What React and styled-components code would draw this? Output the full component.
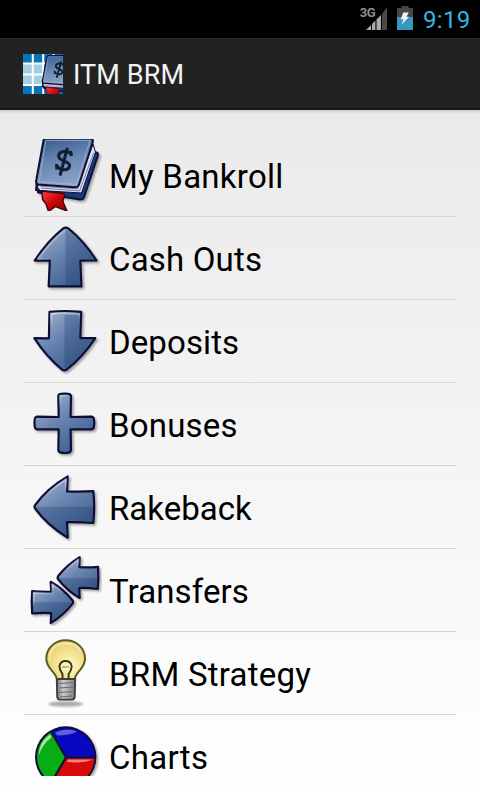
import React from 'react';
import styled, {createGlobalStyle} from 'styled-components';

const NAVY = '#0e0f38';

const Defs = () => (
  <ScDefs width="0" height="0" aria-hidden="true">
    <defs>
      <linearGradient id="steel" x1="0" y1="0" x2="0.7" y2="1">
        <stop offset="0" stopColor="#a9b8d2" />
        <stop offset="0.5" stopColor="#6884af" />
        <stop offset="1" stopColor="#3c5d8e" />
      </linearGradient>
      <linearGradient id="cover" x1="0.2" y1="0" x2="0.5" y2="1">
        <stop offset="0" stopColor="#3a5c8c" />
        <stop offset="0.45" stopColor="#6686b2" />
        <stop offset="1" stopColor="#8fa4c8" />
      </linearGradient>
      <linearGradient id="shine" x1="0" y1="0" x2="0.6" y2="1">
        <stop offset="0" stopColor="#fff" stopOpacity="0.75" />
        <stop offset="0.6" stopColor="#fff" stopOpacity="0" />
      </linearGradient>
      <linearGradient id="ribbon" x1="0" y1="0" x2="1" y2="1">
        <stop offset="0" stopColor="#f04040" />
        <stop offset="0.5" stopColor="#cc0505" />
        <stop offset="1" stopColor="#960000" />
      </linearGradient>
      <radialGradient id="glass" cx="0.6" cy="0.65" r="0.65">
        <stop offset="0" stopColor="#fffbd2" />
        <stop offset="0.5" stopColor="#f4e592" />
        <stop offset="1" stopColor="#e6d074" />
      </radialGradient>
      <linearGradient id="screw" x1="0" y1="0" x2="1" y2="0">
        <stop offset="0" stopColor="#777" />
        <stop offset="0.35" stopColor="#ccc" />
        <stop offset="1" stopColor="#7b7b7b" />
      </linearGradient>
      <filter id="drop" x="-20%" y="-20%" width="150%" height="150%">
        <feDropShadow dx="1.8" dy="1.8" stdDeviation="1.1" floodColor="#000" floodOpacity="0.35" />
      </filter>
      <filter id="soft" x="-20%" y="-60%" width="140%" height="220%">
        <feGaussianBlur stdDeviation="1.2" />
      </filter>
    </defs>
  </ScDefs>
);

const BookShape = () => (
  <>
    <path d="M61 12 L67 13.5 Q68.5 14.5 67.8 17 L54 58.5 Q53 61 50 60.5 L8 53.5 L8 47 Z" fill="#173a78" stroke={NAVY} strokeWidth="1.8" filter="url(#drop)" />
    <path d="M63 5 L65.5 13 L51.5 54 L10 51.5 Q6.5 49 8 45 L47 48 Z" fill="#dfe2ee" stroke={NAVY} strokeWidth="1" />
    <path d="M11 49 L49.5 52 L63.5 14 M10 47 L48.5 50" fill="none" stroke="#777e9f" strokeWidth="1" />
    <path d="M16 -0.6 L61 -0.2 Q63.5 0 62.7 3.5 L49 45.5 Q48 48.8 44.5 48.3 L8 45.5 Q5.3 44.5 6.3 41 L13.5 1.5 Q14 -0.5 16 -0.6 Z" fill="url(#cover)" stroke={NAVY} strokeWidth="2" />
    <path d="M15.8 1.4 L60 1.4 L46.5 45.5 L9 42.9 Z" fill="none" stroke="#b1c0da" strokeWidth="1.1" opacity="0.6" />
    <path d="M6.5 44 L6 51 L12 53" fill="none" stroke={NAVY} strokeWidth="1.8" />
    <path d="M12 52 L33.5 54.5 Q36 56 34 59 Q32 61.5 34 65 L37 72 L25.5 67.5 L18.5 72.5 L16 65 L12.5 60.5 Z" fill="url(#ribbon)" stroke="#3b0712" strokeWidth="1.4" />
    <path d="M41.5 15.5 C38 10.5 28.5 12 28.6 17.5 C29 22.5 40.5 22 39.6 27.2 C38.3 32.5 29 31.5 26.7 26.5 M37.4 8.8 L30 36.5" fill="none" stroke="#111d30" strokeWidth="3" />
    <path d="M40.5 12 L41.5 17 M26.4 25 L27 30.5" stroke="#111d30" strokeWidth="3" />
  </>
);

const Arrow = ({d, shade, shine}) => (
  <>
    <path d={d} fill="url(#steel)" stroke={NAVY} strokeWidth="2.2" strokeLinejoin="round" filter="url(#drop)" />
    {shade && <path d={shade} fill="#123164" opacity="0.26" />}
    {shine && <path d={shine} fill="none" stroke="url(#shine)" strokeWidth="2.2" strokeLinejoin="round" />}
  </>
);

const UpIcon = () => (
  <Arrow
    d="M33.3 6.4 Q35.7 4.8 38.2 6.4 Q54 19 66.5 38.5 L50.3 38.7 L51.4 64.4 L18.7 64.4 L19.8 38.7 L4.7 38.7 Q17.5 19 33.3 6.4 Z"
    shade="M35.5 6.9 Q53 19 64.6 37.3 L49 37.3 L50 63.2 L35.5 63.2 Z"
    shine="M20.4 63 L21.5 37 L8 37 Q20.5 19 35.7 7.8"
  />
);

const DownIcon = () => (
  <Arrow
    d="M19.5 6.8 Q35 5.4 51.2 6.8 L50.3 33.2 L65.3 33.2 Q52.5 52.5 36.6 64.6 Q34.3 66.2 32 64.6 Q17 52.5 4.3 33.2 L18.9 33.3 Z"
    shade="M34.4 10 L49.2 10 L49 34.4 L62.8 34.4 Q50 52.5 34.4 63.8 Z"
    shine="M7 34.9 L20.9 34.9 L21.3 8.8 Q35 7.2 49.1 8.8 L49 19"
  />
);

const PlusIcon = () => (
  <Arrow
    d="M28.3 8.2 Q28.5 6.2 31 5.9 Q34.7 5.3 38.3 5.9 Q40.8 6.2 41 8.2 L40.6 29 L61.3 28.7 Q63.5 28.8 63.9 31.2 Q64.6 35 63.9 38.8 Q63.5 41.2 61.3 41.3 L40.6 41.3 L41 62 Q40.8 64.3 38.3 64.7 Q34.7 65.3 31 64.7 Q28.5 64.3 28.3 62 L28.7 41.3 L7.5 41.3 Q5.2 41.2 4.8 38.8 Q4.1 35 4.8 31.2 Q5.2 28.8 7.5 28.7 L28.7 29 Z"
    shine="M30 40 L6.6 39.7 L6.6 30.7 L30.4 30.8 L30.2 7.8 L38.5 7.5"
  />
);

const LeftIcon = () => (
  <Arrow
    d="M37.7 5.5 L37 20.4 Q51 21 63.3 20.2 Q65 36 63.3 52 Q50 51 37 51.2 L37.7 66.7 Q17 54 5.2 37.5 Q3.8 35.8 5.2 34 Q17 17.5 37.7 5.5 Z"
    shade="M5.7 35.8 L63.3 35.8 Q63.6 44 62 50.6 Q50 49.5 36 49.7 L36.4 64.2 Q17 52 5.7 35.8 Z"
    shine="M7 35 Q18 19.5 36 8.5 L35.6 22 L61.8 21.9"
  />
);

const TransferIcon = () => (
  <>
    <Arrow
      d="M49.7 3.2 L49.2 13.2 Q59 13.8 68 12.9 Q68.9 24 67.7 35 Q58.5 33.8 49.2 34 L49.7 44 Q37 36.5 28.2 25.2 Q27 23.7 28.2 22 Q37 10.8 49.7 3.2 Z"
      shade="M29 24 L67.4 24 L66.5 33.6 L48 32.8 L48.4 42 Q37 35 29 24 Z"
      shine="M30 23 Q37.5 13.3 48.3 5.6 L47.8 14.8 L66.5 14.6"
    />
    <Arrow
      d="M20.7 27.8 Q34 35.5 42.6 46.5 Q43.8 48 42.6 49.7 Q34 61 20.7 69 L21.2 59.1 Q11.5 58.6 2.2 59.4 Q1.2 48.5 2.2 37.2 Q11.5 38 21.2 37.7 Z"
      shade="M3 48.3 L42 48.3 Q33.5 60 22 67 L22.4 57.8 L3 58 Z"
      shine="M3.8 57 L3.8 38.9 L22.6 39.3 L22.2 30.5 Q34 38 40.6 47"
    />
  </>
);

const BulbIcon = () => (
  <>
    <ellipse cx="35.7" cy="67" rx="17.5" ry="2.8" fill="#000" opacity="0.32" filter="url(#soft)" />
    <path d="M35.7 3.3 C24.5 3.3 16.3 11.4 16.3 21.7 C16.3 32 26 34.5 27 42.5 L44.5 42.5 C45.5 34.5 55 32 55 21.7 C55 11.4 46.9 3.3 35.7 3.3 Z" fill="url(#glass)" stroke="#5a5c1e" strokeWidth="2" />
    <path d="M19.5 23 C19 13 26 6.5 35 6.3 C42 6.3 47.5 9 50 13.5" fill="none" stroke="#fff" strokeWidth="1.5" opacity="0.5" />
    <path d="M32.5 42 L32.5 37 Q29.2 32 29.5 29 Q30.5 24 35.5 24 Q40.7 24 41.6 29 Q42 32 38.6 37 L38.6 42" fill="none" stroke="#35341b" strokeWidth="1.9" />
    <path d="M32 31 Q34 27.8 35.7 30.5 Q37.5 27.8 39.5 31" fill="none" stroke="#7c7632" strokeWidth="1" />
    <path d="M26.8 42 L45.2 42 L44.7 60 Q44.5 62.6 42 62.6 L30 62.6 Q27.4 62.6 27.2 60 Z" fill="url(#screw)" stroke="#3e3e3e" strokeWidth="1.9" />
    <path d="M29 46.5 L43 45.5 M29 51 L43 50 M29 55.5 L43 54.5 M30 60 L42 59" stroke="#6b6b6b" strokeWidth="1.2" />
  </>
);

const PieIcon = () => (
  <>
    <circle cx="35.7" cy="37" r="30.7" fill={NAVY} filter="url(#drop)" />
    <path d="M36 37 L21.5 12.1 A28.8 28.8 0 0 1 64.5 37 Z" fill="#0808c0" />
    <path d="M36 37 L64.5 37 A28.8 28.8 0 0 1 21.4 61.9 Z" fill="#d80909" />
    <path d="M36 37 L21.4 61.9 A28.8 28.8 0 0 1 21.5 12.1 Z" fill="#08ad14" />
    <path d="M21.3 11.8 L36 37.5 L65.5 37.5 M36 37.5 L21 63" fill="none" stroke={NAVY} strokeWidth="2.2" />
    <path d="M25 12.5 Q36 7 47 11.5 Q40 15.5 27 15.5 Z" fill="#fff" opacity="0.35" />
    <path d="M38 39.5 L62.5 39.5 Q54 43.5 36.5 42 Z" fill="#fff" opacity="0.5" />
    <path d="M19.8 14.5 Q9 22 8.5 36 Q12 24 21.5 17.5 Z" fill="#fff" opacity="0.65" />
  </>
);

const AppLogo = () => (
  <ScLogo viewBox="0 0 40 40">
    <rect width="40" height="40" fill="#0874ba" />
    <path d="M0 10 H20 V31 H0 Z" fill="#a5cde3" />
    <path d="M9.8 0 V40 M20.2 0 V40 M30.5 0 V40 M0 9.6 H40 M0 20.4 H40 M0 31 H40" stroke="#fff" strokeWidth="2" />
    <g transform="translate(15.7 1.9) scale(.6)">
      <BookShape />
    </g>
  </ScLogo>
);

const menu = [
  {label: 'My Bankroll', Icon: BookShape, spacing: '0.25px'},
  {label: 'Cash Outs', Icon: UpIcon},
  {label: 'Deposits', Icon: DownIcon, spacing: '0.1px'},
  {label: 'Bonuses', Icon: PlusIcon},
  {label: 'Rakeback', Icon: LeftIcon, spacing: '0'},
  {label: 'Transfers', Icon: TransferIcon, spacing: '0.1px'},
  {label: 'BRM Strategy', Icon: BulbIcon, spacing: '0.25px'},
  {label: 'Charts', Icon: PieIcon, spacing: '0.3px'},
];

const App = () => {
  return (
    <>
      <GlobalStyle />
      <Defs />
      <ScScreen>
        <ScStatusBar>
          <ScNetwork>3G</ScNetwork>
          <ScSignal viewBox="0 0 22 24">
            <path d="M0 24 L5 19 V24 Z M6 18 L9.4 14.6 V24 H6 Z M10.5 13.5 L15 9 V24 H10.5 Z" fill="#aaa" />
            <path d="M16 8 L21 1 V24 H16 Z" fill="#484848" />
          </ScSignal>
          <ScBattery viewBox="0 0 16 24">
            <path d="M4.5 0 H11.5 V2 H16 V11 H0 V2 H4.5 Z" fill="#464646" />
            <path d="M0 11 H16 V24 H0 Z" fill="#3499bd" />
            <path d="M6.2 6.5 L11.8 6.5 L9.4 10.8 L12 10.8 L4.6 18.8 L6.6 13.2 L3.8 13.2 Z" fill="#f2f2f2" />
          </ScBattery>
          <ScClock>9:19</ScClock>
        </ScStatusBar>
        <ScActionBar>
          <AppLogo />
          <ScTitle>ITM BRM</ScTitle>
        </ScActionBar>
        <ScContent>
          <ScList>
            {menu.map(({label, Icon, spacing}) => (
              <ScRow key={label}>
                <ScIcon viewBox="0 0 72 72">
                  <Icon />
                </ScIcon>
                <ScLabel $spacing={spacing}>{label}</ScLabel>
              </ScRow>
            ))}
          </ScList>
        </ScContent>
      </ScScreen>
    </>
  );
};

const GlobalStyle = createGlobalStyle`
  * {
    box-sizing: border-box;
  }
  body {
    margin: 0;
    font-family: Roboto, 'Liberation Sans', sans-serif;
  }
`;

const ScDefs = styled.svg`
  position: absolute;
`;

const ScScreen = styled.div`
  width: 480px;
  height: 800px;
  display: flex;
  flex-direction: column;
  overflow: hidden;
`;

const ScStatusBar = styled.div`
  height: 38px;
  flex-shrink: 0;
  display: flex;
  align-items: flex-start;
  justify-content: flex-end;
  padding-right: 9px;
  background-color: #000;
`;

const ScNetwork = styled.span`
  margin: 4px -9px 0 0;
  font-size: 13px;
  font-weight: 700;
  line-height: 17px;
  letter-spacing: -0.5px;
  color: #8c8c8c;
`;

const ScSignal = styled.svg`
  width: 22px;
  height: 24px;
  margin: 6px 9px 0 0;
`;

const ScBattery = styled.svg`
  width: 16px;
  height: 24px;
  margin: 6px 10px 0 0;
`;

const ScClock = styled.span`
  width: 48px;
  padding-top: 1px;
  font-size: 24px;
  line-height: 38px;
  letter-spacing: 0.3px;
  color: #33b5e5;
  white-space: nowrap;
`;

const ScActionBar = styled.header`
  height: 72px;
  flex-shrink: 0;
  display: flex;
  align-items: center;
  gap: 10px;
  padding-left: 23px;
  background-color: #222;
  border-top: 1px solid #2e2e2e;
  border-bottom: 2px solid #191919;
`;

const ScLogo = styled.svg`
  width: 40px;
  height: 40px;
`;

const ScTitle = styled.h1`
  margin: 0;
  padding-top: 2px;
  font-size: 27px;
  font-weight: 400;
  letter-spacing: 0.1px;
  color: #f3f3f3;
`;

const ScContent = styled.main`
  flex: 1;
  min-height: 0;
  padding: 24px;
  background: linear-gradient(#0002, #0000 4px), linear-gradient(#eaeaea, #fff);
`;

const ScList = styled.ul`
  height: 100%;
  margin: 0;
  padding: 0;
  overflow: hidden;
  list-style: none;
`;

const ScRow = styled.li`
  height: 83px;
  display: flex;
  align-items: center;
  gap: 7px;
  padding-left: 6px;
  border-bottom: 1px solid #d5d5d5;
`;

const ScIcon = styled.svg`
  width: 72px;
  height: 72px;
  flex-shrink: 0;
`;

const ScLabel = styled.span`
  padding-top: 4px;
  font-size: 33px;
  line-height: 40px;
  letter-spacing: ${({$spacing}) => $spacing || '0.18px'};
  color: #000;
  white-space: nowrap;
`;

export default App;
